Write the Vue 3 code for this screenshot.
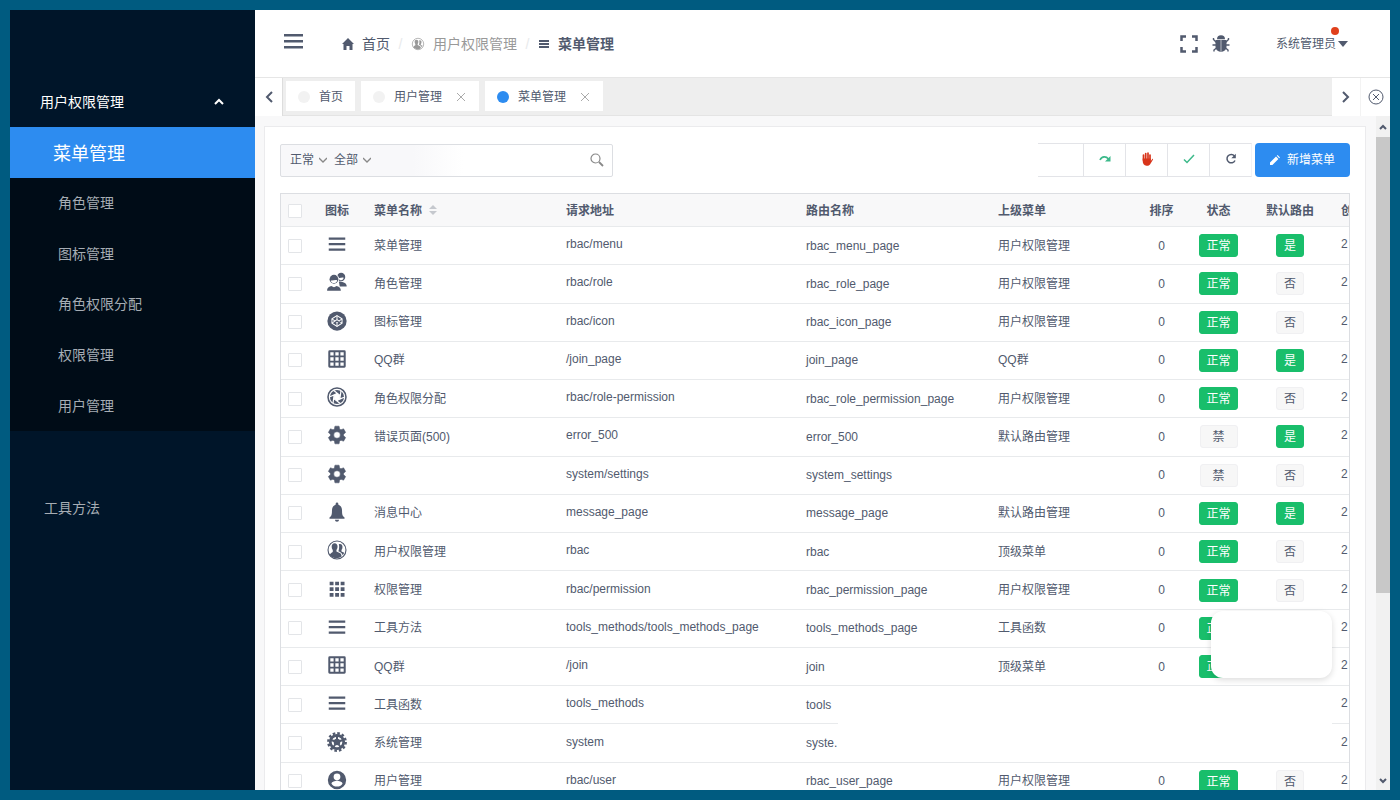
<script setup>
import { ref } from 'vue';

const sideItems = ['菜单管理', '角色管理', '图标管理', '角色权限分配', '权限管理', '用户管理'];
const activeItem = ref('菜单管理');

const tabs = [
    { name: '首页', closable: false },
    { name: '用户管理', closable: true },
    { name: '菜单管理', closable: true }
];
const activeTab = ref('菜单管理');

const status = ref('正常');
const scope = ref('全部');
const keyword = ref('');

const GEAR = '<path fill-rule="evenodd" d="M19.14 12.94c.04-.3.06-.61.06-.94 0-.32-.02-.64-.07-.94l2.03-1.58c.18-.14.23-.41.12-.61l-1.92-3.32c-.12-.22-.37-.29-.59-.22l-2.39.96c-.5-.38-1.03-.7-1.62-.94L14.4 2.81c-.04-.24-.24-.41-.48-.41h-3.84c-.24 0-.43.17-.47.41L9.25 5.35c-.59.24-1.13.57-1.62.94l-2.39-.96c-.22-.08-.47 0-.59.22L2.74 8.87c-.12.21-.08.47.12.61l2.03 1.58c-.05.3-.09.63-.09.94s.02.64.07.94l-2.03 1.58c-.18.14-.23.41-.12.61l1.92 3.32c.12.22.37.29.59.22l2.39-.96c.5.38 1.03.7 1.62.94l.36 2.54c.05.24.24.41.48.41h3.84c.24 0 .44-.17.47-.41l.36-2.54c.59-.24 1.13-.56 1.62-.94l2.39.96c.22.08.47 0 .59-.22l1.92-3.32c.12-.22.07-.47-.12-.61l-2.01-1.58zM12 15.6A3.6 3.6 0 1 1 12 8.4a3.6 3.6 0 0 1 0 7.2z" stroke="currentColor" stroke-width=".6"/>';
const LINES = '<path d="M3 5h18v2.300H3zM3 11h18v2.300H3zM3 17h18v2.300H3z"/>';
const FRIENDS = '<path d="M9.400 4.500c2 0 3.200 1.500 3.200 3.700 0 1.700-.5 2.900-1.200 3.700v1.700l3.600 1.800c1.500.8 1.900 2 2 3.800A9.500 9.500 0 0 1 4 17.600c.6-1.800 2.200-2.400 3.400-3.300v-2.400c-.8-.8-1.200-2-1.200-3.700 0-2.200 1.200-3.700 3.200-3.700z"/><path d="M14 5.800c.4-.2.8-.3 1.300-.3 1.700 0 2.700 1.300 2.700 3.200 0 1.500-.4 2.600-1.100 3.300v1.500l3 1.600a9 9 0 0 1-1.700 2.600c-.5-2.200-1.900-3.200-4.700-4.400.8-1.800 1.200-4.900.5-7.500z"/>';

const icons = {
    menu: LINES,
    people: '<circle cx="16.500" cy="6.500" r="4.500"/><path d="M14 11.500c4.500 0 8.600 1.500 8.600 5.500H15z"/><path d="M13.500 7.500c1.800.5 3.500-.6 5.700-.2-.1 1.600-1.200 2.700-2.700 2.900-1.200 0-2.400-1.200-3-2.700z" fill="#fff"/><circle cx="8.700" cy="9" r="5.700" fill="#fff"/><circle cx="8.700" cy="9" r="4.800"/><path d="M.600 22c0-5 3.600-6.800 8.100-6.800s8.100 1.800 8.100 6.800z" fill="#fff"/><path d="M1.200 21.500c0-4 3-4.600 4.500-5.200l3 1.500 3-1.500c1.500.6 4.500 1.200 4.500 5.200z"/><path d="M5.200 10.300c2.500.5 4.500-1.200 7-.2-.2 2-1.500 3.100-3.500 3.100s-3.200-1-3.500-2.900z" fill="#fff"/>',
    codepen: '<circle cx="12" cy="12" r="10.500"/><g fill="none" stroke="#fff" stroke-width="1.100"><path d="M12 6.200l5.500 3.500v4.700L12 18l-5.500-3.600V9.700z"/><path d="M6.500 9.700L12 13.500l5.500-3.800M6.500 14.400L12 10.500l5.500 3.900M12 6.200v4.300M12 13.500V18"/></g>',
    grid: '<path fill-rule="evenodd" d="M4 2.500h16q1.500 0 1.500 1.500v16q0 1.500-1.500 1.500H4q-1.500 0-1.500-1.500V4q0-1.500 1.500-1.500zM4.700 4.700v3.600h3.600V4.700zM10.200 4.700v3.600h3.600V4.700zM15.700 4.700v3.600h3.600V4.700zM4.700 10.200v3.600h3.600v-3.600zM10.200 10.200v3.600h3.600v-3.600zM15.700 10.200v3.600h3.600v-3.600zM4.700 15.700v3.600h3.600v-3.600zM10.200 15.700v3.600h3.600v-3.600zM15.700 15.700v3.600h3.600v-3.600z"/>',
    aperture: '<circle cx="12" cy="12" r="9.800" fill="none" stroke="currentColor" stroke-width="1.700"/><circle cx="12" cy="12" r="7.700"/><path d="M12 8.300l3.200 1.900v3.700L12 15.700l-3.200-1.800v-3.700z" fill="#fff"/><path d="M15.200 10.200L8.500 5M15.200 13.900l1.100-8.400M12 15.700l7.700-3.400M8.800 13.900l6.700 5.100M8.800 10.200l-1.100 8.300M12 8.300l-7.700 3.400" stroke="#fff" stroke-width="1.300"/>',
    gear: GEAR,
    bell: '<path d="M12 22.500c1.300 0 2.200-.8 2.200-2.100H9.800c0 1.300.9 2.100 2.200 2.100zM18.700 16.500c-1-1.300-1.200-3-1.200-6 0-3.500-1.600-5.700-4-6.400V3.300c0-.9-.7-1.600-1.500-1.600s-1.500.7-1.500 1.600v.8c-2.400.7-4 2.900-4 6.400 0 3-.2 4.700-1.200 6L3.800 18v1.300h16.400V18z"/>',
    friends: '<circle cx="12" cy="12" r="9.800" fill="none" stroke="currentColor" stroke-width="1.200"/>' + FRIENDS,
    apps: '<path d="M4 4h4.200v4H4zM10 4h4.200v4H10zM16 4h4.200v4H16zM4 10.200h4.200v4H4zM10 10.200h4.200v4H10zM16 10.200h4.200v4H16zM4 16.400h4.200v4H4zM10 16.400h4.200v4H10zM16 16.400h4.200v4H16z"/>',
    cog: '<circle cx="12" cy="12" r="9.500" fill="none" stroke="currentColor" stroke-width="2.600" stroke-dasharray="2.800 2.174"/><circle cx="12" cy="12" r="7.300" fill="none" stroke="currentColor" stroke-width="3"/><circle cx="12" cy="12" r="3.600"/><path d="M12 12V5M12 12l6.600-2.200M12 12l4.100 5.700M12 12l-4.100 5.700M12 12L5.400 9.800" stroke="currentColor" stroke-width="2.200"/>',
    user: '<path fill-rule="evenodd" d="M12 2a10 10 0 1 0 0 20 10 10 0 0 0 0-20zm0 2.800a3.700 3.700 0 1 1 0 7.400 3.700 3.700 0 0 1 0-7.400zm0 14.400c-2.500 0-4.700-1.200-6-3.200 0-2 4-3.100 6-3.100s6 1.100 6 3.100c-1.300 2-3.500 3.200-6 3.200z"/>'
};

const rows = [
    { icon: 'menu', name: '菜单管理', url: 'rbac/menu', route: 'rbac_menu_page', parent: '用户权限管理', on: true, def: true },
    { icon: 'people', name: '角色管理', url: 'rbac/role', route: 'rbac_role_page', parent: '用户权限管理', on: true, def: false },
    { icon: 'codepen', name: '图标管理', url: 'rbac/icon', route: 'rbac_icon_page', parent: '用户权限管理', on: true, def: false },
    { icon: 'grid', name: 'QQ群', url: '/join_page', route: 'join_page', parent: 'QQ群', on: true, def: true },
    { icon: 'aperture', name: '角色权限分配', url: 'rbac/role-permission', route: 'rbac_role_permission_page', parent: '用户权限管理', on: true, def: false },
    { icon: 'gear', name: '错误页面(500)', url: 'error_500', route: 'error_500', parent: '默认路由管理', on: false, def: true },
    { icon: 'gear', name: '', url: 'system/settings', route: 'system_settings', parent: '', on: false, def: false },
    { icon: 'bell', name: '消息中心', url: 'message_page', route: 'message_page', parent: '默认路由管理', on: true, def: true },
    { icon: 'friends', name: '用户权限管理', url: 'rbac', route: 'rbac', parent: '顶级菜单', on: true, def: false },
    { icon: 'apps', name: '权限管理', url: 'rbac/permission', route: 'rbac_permission_page', parent: '用户权限管理', on: true, def: false },
    { icon: 'menu', name: '工具方法', url: 'tools_methods/tools_methods_page', route: 'tools_methods_page', parent: '工具函数', on: true },
    { icon: 'grid', name: 'QQ群', url: '/join', route: 'join', parent: '顶级菜单', on: true },
    { icon: 'menu', name: '工具函数', url: 'tools_methods', route: 'tools', blank: true },
    { icon: 'cog', name: '系统管理', url: 'system', route: 'syste.', blank: true },
    { icon: 'user', name: '用户管理', url: 'rbac/user', route: 'rbac_user_page', parent: '用户权限管理', on: true, def: false }
];
</script>

<template>
  <div class="app">
    <!-- SIDEBAR -->
    <aside class="sidebar">
      <button class="group-title">
        <span>用户权限管理</span>
        <svg width="10" height="10" viewBox="0 0 10 10"><path d="M1 7l4-4 4 4" fill="none" stroke="currentColor" stroke-width="2" /></svg>
      </button>
      <nav class="submenu">
        <a v-for="item in sideItems" :key="item" href="#" :class="{ active: item === activeItem }" @click.prevent="activeItem = item">{{ item }}</a>
      </nav>
      <a class="tools" href="#" @click.prevent>工具方法</a>
    </aside>

    <div class="main">
      <!-- HEADER -->
      <header class="header">
        <button class="toggle" aria-label="menu">
          <svg width="20" height="16" viewBox="0 0 20 16"><path d="M0 1h19v2.500H0zM0 7h19v2.500H0zM0 13h19v2.500H0z" fill="currentColor" /></svg>
        </button>
        <nav class="crumbs">
          <a href="#" class="home">
            <svg width="12" height="12" viewBox="0 0 12 12"><path d="M6 0l6 6h-1.500v6H7.500V8h-3v4h-3V6H0z" fill="currentColor" /></svg>
            首页
          </a>
          <span class="sep">/</span>
          <a href="#" class="mid">
            <svg width="14" height="14" viewBox="0 0 24 24" fill="currentColor" v-html="icons.friends"></svg>
            用户权限管理
          </a>
          <span class="sep">/</span>
          <span class="here">
            <svg width="12" height="12" viewBox="0 0 12 12"><path d="M1 2h10v2H1zM1 5h10v2H1zM1 8h10v2H1z" fill="currentColor" /></svg>
            菜单管理
          </span>
        </nav>
        <div class="tools-right">
          <button aria-label="fullscreen">
            <svg width="18" height="18" viewBox="0 0 18 18"><path d="M1.500 6V1.500H6M12 1.500h4.500V6M16.500 12v4.500H12M6 16.500H1.500V12" fill="none" stroke="currentColor" stroke-width="2.500" /></svg>
          </button>
          <button class="bug" aria-label="bug">
            <svg width="18" height="18" viewBox="0 0 18 18">
              <path d="M5 4.200a4 4 0 0 1 8 0zM3.500 5h5.200v12C5.500 16.500 3.500 14.500 3.500 12zM9.300 5h5.200v7c0 2.500-2 4.500-5.200 5z" fill="currentColor" />
              <path d="M4.500 7.500L1.500 4.500V3M4 10H.5M4.500 13l-2.500 2v1.500M13.500 7.500l3-3V3M14 10h3.500M13.500 13l2.500 2v1.500" fill="none" stroke="currentColor" stroke-width="1.400" />
            </svg>
          </button>
          <button class="account">
            系统管理员
            <svg width="10" height="6" viewBox="0 0 10 6"><path d="M0 0h10L5 6z" fill="currentColor" /></svg>
            <i class="dot"></i>
          </button>
        </div>
      </header>

      <!-- TABS -->
      <div class="tabbar">
        <button class="nav-arrow left" aria-label="prev">
          <svg width="8" height="12" viewBox="0 0 8 12"><path d="M7 1L2 6l5 5" fill="none" stroke="currentColor" stroke-width="2" /></svg>
        </button>
        <div class="tabs">
          <div v-for="t in tabs" :key="t.name" class="tab" :class="{ active: t.name === activeTab }" @click="activeTab = t.name">
            <i></i>
            <span>{{ t.name }}</span>
            <button v-if="t.closable" aria-label="close">
              <svg width="8" height="8" viewBox="0 0 8 8"><path d="M0 0l8 8M8 0L0 8" stroke="currentColor" /></svg>
            </button>
          </div>
        </div>
        <button class="nav-arrow" aria-label="next">
          <svg width="8" height="12" viewBox="0 0 8 12"><path d="M1 1l5 5-5 5" fill="none" stroke="currentColor" stroke-width="2" /></svg>
        </button>
        <button class="nav-arrow close-all" aria-label="close all">
          <svg width="16" height="16" viewBox="0 0 16 16"><circle cx="8" cy="8" r="7" fill="none" stroke="currentColor" /><path d="M5 5l6 6M11 5l-6 6" stroke="currentColor" /></svg>
        </button>
      </div>

      <div class="body">
        <div class="content">
          <div class="card">
            <div class="toolbar">
              <div class="search">
                <select v-model="status" aria-label="状态">
                  <option>正常</option>
                </select>
                <select v-model="scope" aria-label="范围">
                  <option>全部</option>
                </select>
                <input v-model="keyword" type="text" aria-label="搜索">
                <button aria-label="search">
                  <svg width="14" height="14" viewBox="0 0 14 14"><circle cx="5.500" cy="5.500" r="4.500" fill="none" stroke="currentColor" stroke-width="1.200" /><path d="M9 9l4 4" stroke="currentColor" stroke-width="1.800" /></svg>
                </button>
              </div>
              <div class="actions">
                <div class="btn-group">
                  <button class="first" aria-label="undo"></button>
                  <button class="green" aria-label="redo">
                    <svg width="12" height="8" viewBox="0 0 12 8"><path d="M1 5c2-4 6-4 8.500-1" fill="none" stroke="currentColor" stroke-width="1.600" /><path d="M11.500 1v5.500H6z" fill="currentColor" /></svg>
                  </button>
                  <button class="red" aria-label="disable">
                    <svg width="12" height="14" viewBox="0 0 12 14"><path d="M2.500 8V3M4.700 7V1.500M7 7V1.200M9 8V3" stroke="currentColor" stroke-width="1.700" stroke-linecap="round" /><path d="M1.700 6.500h8.100V9l1.500-2c.5-.4 1 .2.600.8L9 12.500c-.8 1-2 1.500-3.500 1.300C3 13.500 1.700 11.500 1.700 9z" fill="currentColor" /></svg>
                  </button>
                  <button class="green" aria-label="enable">
                    <svg width="12" height="10" viewBox="0 0 12 10"><path d="M1 5.500L4 8.500 11 1" fill="none" stroke="currentColor" stroke-width="1.500" /></svg>
                  </button>
                  <button aria-label="refresh">
                    <svg width="12" height="12" viewBox="0 0 12 12"><path d="M9.500 3A4.200 4.200 0 1 0 10 7.500" fill="none" stroke="currentColor" stroke-width="1.500" /><path d="M10.800.8v4.500H6.300z" fill="currentColor" /></svg>
                  </button>
                </div>
                <button class="primary">
                  <svg width="10" height="10" viewBox="0 0 10 10"><path d="M0 10V7.600L6 1.600 8.400 4l-6 6zM6.800.8L7.600 0 10 2.400l-.8.8z" fill="currentColor" /></svg>
                  新增菜单
                </button>
              </div>
            </div>

            <div class="table-wrap">
              <table>
                <colgroup>
                  <col class="w-check"><col class="w-icon"><col class="w-name"><col class="w-url"><col class="w-name">
                  <col class="w-parent"><col class="w-sort"><col class="w-state"><col class="w-def"><col>
                </colgroup>
                <thead>
                  <tr>
                    <th class="check"><input type="checkbox" aria-label="全选"></th>
                    <th class="center">图标</th>
                    <th>
                      菜单名称
                      <svg class="sort" width="8" height="10" viewBox="0 0 8 10"><path d="M0 4l4-4 4 4zM0 6h8l-4 4z" fill="currentColor" /></svg>
                    </th>
                    <th>请求地址</th>
                    <th>路由名称</th>
                    <th>上级菜单</th>
                    <th class="center">排序</th>
                    <th class="center">状态</th>
                    <th class="center">默认路由</th>
                    <th class="created">创</th>
                  </tr>
                </thead>
                <tbody>
                  <tr v-for="(row, i) in rows" :key="i">
                    <td class="check"><input type="checkbox" :aria-label="row.url"></td>
                    <td class="center lift"><svg class="icon" width="22" height="22" viewBox="0 0 24 24" fill="currentColor" v-html="icons[row.icon]"></svg></td>
                    <td>{{ row.name }}</td>
                    <td class="lift">{{ row.url }}</td>
                    <td>{{ row.route }}</td>
                    <td>{{ row.parent }}</td>
                    <td class="center"><template v-if="!row.blank">0</template></td>
                    <td class="center"><span v-if="!row.blank" class="tag wide" :class="{ on: row.on }">{{ row.on ? '正常' : '禁' }}</span></td>
                    <td class="center"><span v-if="row.def !== undefined" class="tag" :class="{ on: row.def }">{{ row.def ? '是' : '否' }}</span></td>
                    <td class="created lift">2</td>
                  </tr>
                </tbody>
              </table>
              <div class="blank-area"></div>
              <div class="float-box"></div>
            </div>
          </div>
        </div>

        <div class="scrollbar">
          <svg width="8" height="6" viewBox="0 0 8 6"><path d="M1 5l3-3 3 3" fill="none" stroke="currentColor" stroke-width="2" /></svg>
          <div class="track"><div class="thumb"></div></div>
          <svg width="8" height="6" viewBox="0 0 8 6"><path d="M1 1l3 3 3-3" fill="none" stroke="currentColor" stroke-width="2" /></svg>
        </div>
      </div>
    </div>
  </div>
</template>

<style>
body {
  margin: 0;
}
</style>

<style scoped>
* {
  box-sizing: border-box;
}

.app {
  display: flex;
  height: 100vh;
  border: 10px solid #005b80;
  overflow: hidden;
  background: #fff;
  color: #515a6e;
  font-family: "Liberation Sans", "Noto Sans CJK SC", sans-serif;
  font-size: 12px;
  line-height: 18px;
}

a {
  color: inherit;
  text-decoration: none;
}

button,
input,
select {
  margin: 0;
  padding: 0;
  border: 0;
  background: none;
  color: inherit;
  font: inherit;
}

svg {
  display: block;
  flex: none;
}

/* sidebar */
.sidebar {
  flex: none;
  width: 245px;
  padding-top: 67px;
  background: #001529;
  color: #a6adb4;
  font-size: 14px;
}

.group-title {
  display: flex;
  align-items: center;
  justify-content: space-between;
  width: 100%;
  height: 50px;
  padding: 0 31px 0 30px;
  color: #fff;
}

.submenu {
  display: grid;
  grid-auto-rows: 1fr;
  height: 304px;
  background: #000c17;
}

.submenu a {
  display: flex;
  align-items: center;
  padding-left: 48px;
}

.submenu a.active {
  padding: 4px 0 0 43px;
  background: #2d8cf0;
  color: #fff;
  font-size: 18px;
}

.tools {
  display: flex;
  align-items: center;
  height: 50px;
  margin-top: 52px;
  padding-left: 34px;
}

.main {
  flex: 1;
  min-width: 0;
  display: flex;
  flex-direction: column;
}

/* header */
.header {
  flex: none;
  display: flex;
  align-items: center;
  height: 67px;
  padding: 0 42px 0 29px;
}

.toggle {
  padding-bottom: 6px;
}

.crumbs {
  display: flex;
  align-items: center;
  margin-left: 38px;
  font-size: 14px;
}

.crumbs a,
.here {
  display: flex;
  align-items: center;
  gap: 8px;
}

.crumbs .mid {
  color: #999;
}

.here {
  font-weight: 700;
}

.sep {
  width: 21px;
  text-align: center;
  color: #e8eaec;
}

.tools-right {
  display: flex;
  align-items: center;
  margin-left: auto;
}

.bug {
  margin: 0 46px 0 14px;
}

.account {
  position: relative;
  display: flex;
  align-items: center;
  gap: 2px;
}

.dot {
  position: absolute;
  top: -8px;
  right: 9px;
  width: 8px;
  height: 8px;
  border-radius: 50%;
  background: #e0401c;
}

/* tabs */
.tabbar {
  flex: none;
  display: flex;
  height: 39px;
  border-top: 1px solid #e6e6e6;
}

.nav-arrow {
  display: flex;
  align-items: center;
  justify-content: center;
  width: 28px;
}

.nav-arrow.left {
  border-right: 1px solid #ddd;
}

.close-all {
  width: 30px;
  border-left: 1px solid #f3f3f3;
}

.tabs {
  flex: 1;
  display: flex;
  gap: 6px;
  padding: 3px 3px 4px;
  background: #eee;
  border-bottom: 1px solid #e4e4e4;
}

.tab {
  display: flex;
  align-items: center;
  padding: 2px 12px 0;
  background: #fff;
}

.tab i {
  width: 12px;
  height: 12px;
  margin-right: 9px;
  border-radius: 50%;
  background: #f2f2f2;
}

.tab.active i {
  background: #2d8cf0;
}

.tab button {
  margin: 0 2px 0 15px;
  color: #aaa;
}

/* content */
.body {
  flex: 1;
  min-height: 0;
  display: flex;
}

.content {
  flex: 1;
  min-width: 0;
  overflow: hidden;
  padding: 10px 10px 0 9px;
  background: #f8f8f9;
}

.card {
  border: 1px solid #ebebed;
  padding: 16px 15px;
  background: #fff;
}

.toolbar {
  display: flex;
  align-items: center;
  justify-content: space-between;
  height: 34px;
  margin-bottom: 16px;
}

.search {
  display: flex;
  align-items: center;
  width: 333px;
  height: 33px;
  padding: 0 8px 0 9px;
  border: 1px solid #dcdee2;
  border-radius: 2px;
  background: linear-gradient(90deg, #f8f8fa 0, #f8f8fa 40%, #fff 55%);
}

.search select {
  width: 44px;
  appearance: none;
  background: url("data:image/svg+xml,%3Csvg xmlns='http://www.w3.org/2000/svg' width='8' height='6'%3E%3Cpath d='M0 1l4 4 4-4' fill='none' stroke='%23888' stroke-width='1.300'/%3E%3C/svg%3E") no-repeat 29px center;
}

.search input {
  flex: 1;
  min-width: 0;
  outline: none;
}

.search button {
  color: #888;
}

.actions {
  display: flex;
  gap: 3px;
}

.btn-group {
  display: flex;
}

.btn-group button {
  display: flex;
  align-items: center;
  justify-content: center;
  width: 42px;
  height: 34px;
  padding-bottom: 2px;
  border: 1px solid #e3e4e8;
  border-left: 0;
}

.btn-group button:last-child {
  border-right-color: #f3f3f5;
}

.btn-group .first {
  width: 46px;
}

.green {
  color: #3cb98a;
}

.red {
  color: #d8341a;
}

.primary {
  display: flex;
  align-items: center;
  justify-content: center;
  gap: 7px;
  width: 95px;
  height: 34px;
  border-radius: 4px;
  background: #2d8cf0;
  color: #fff;
}

/* table */
.table-wrap {
  position: relative;
  overflow: hidden;
  border: 1px solid #dcdee2;
  border-bottom: 0;
}

table {
  width: 1256px;
  min-width: 100%;
  height: 607px;
  table-layout: fixed;
  border-collapse: separate;
  border-spacing: 0;
}

.w-check { width: 36px; }
.w-icon { width: 40px; }
.w-name { width: 192px; }
.w-url { width: 240px; }
.w-parent { width: 153px; }
.w-sort { width: 55px; }
.w-state { width: 59px; }
.w-def { width: 84px; }

th,
td {
  height: 38px;
  padding: 0 0 0 17px;
  border-bottom: 1px solid #e8eaec;
  text-align: left;
  white-space: nowrap;
}

th {
  height: 33px;
  padding-top: 2px;
  background: #f8f8f9;
}

.center {
  padding-left: 0;
  text-align: center;
}

.check {
  padding-left: 7px;
}

.created {
  padding-left: 9px;
}

td.lift {
  padding-bottom: 3px;
}

.check input {
  display: block;
  width: 14px;
  height: 14px;
  appearance: none;
  border: 1px solid #e3e5e8;
  border-radius: 1px;
  background: #fff;
}

.icon {
  margin: 0 auto;
}

.sort {
  display: inline-block;
  margin-left: 4px;
  color: #c5c8ce;
}

.tag {
  display: inline-block;
  min-width: 28px;
  height: 23px;
  padding: 0 7px;
  border: 1px solid #f0f0f2;
  border-radius: 3px;
  background: #f7f7f7;
  line-height: 22px;
  vertical-align: middle;
}

.tag.wide {
  min-width: 38px;
  padding: 0 6px;
}

.tag.on {
  border-color: #19be6b;
  background: #19be6b;
  color: #fff;
}

.blank-area {
  position: absolute;
  top: 494px;
  right: 17px;
  left: 557px;
  height: 70px;
  background: #fff;
}

.float-box {
  position: absolute;
  top: 417px;
  right: 17px;
  width: 121px;
  height: 67px;
  border-radius: 12px;
  background: #fff;
  box-shadow: 0 2px 6px rgba(0, 0, 0, 0.14);
}

/* scrollbar */
.scrollbar {
  display: flex;
  flex-direction: column;
  align-items: center;
  gap: 7px;
  width: 14px;
  padding: 8px 0 6px;
  background: #f1f1f1;
}

.track {
  flex: 1;
  width: 100%;
}

.thumb {
  height: 72%;
  background: #c8c8c8;
}
</style>
